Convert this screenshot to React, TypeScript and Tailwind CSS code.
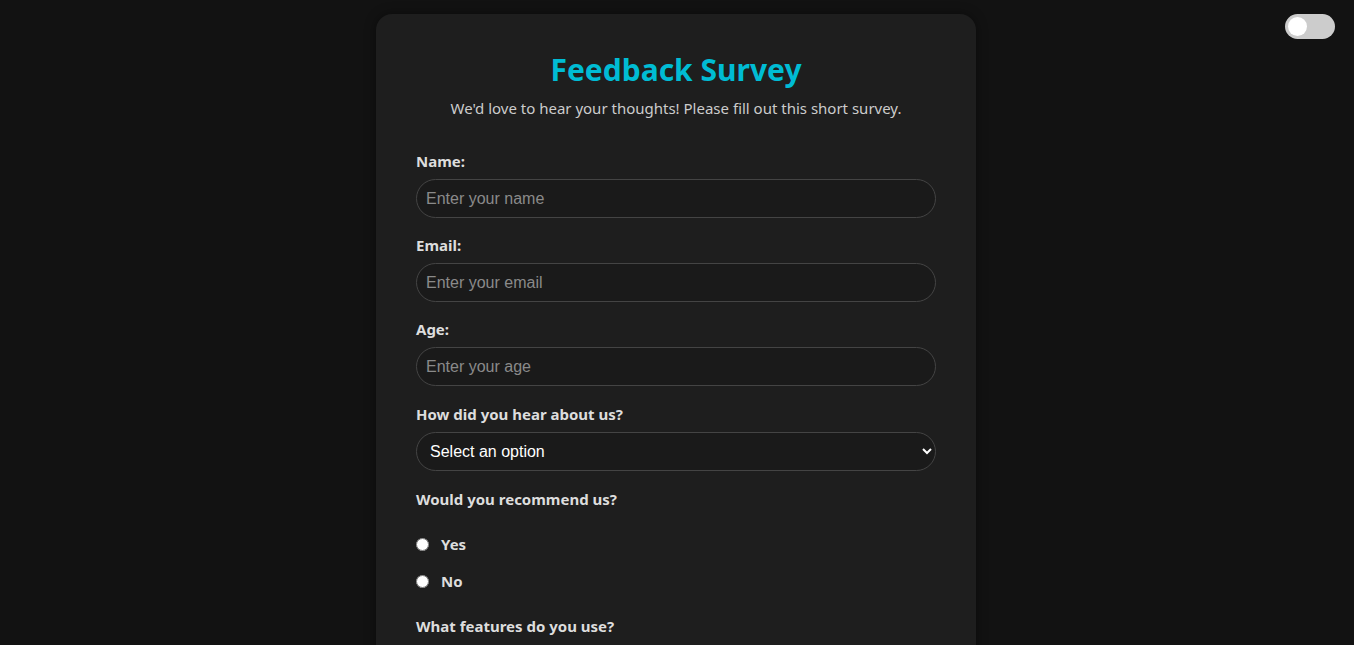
import React, { useState } from 'react';

const labelCls = 'block mb-2 text-[15px] leading-5 font-bold text-[#dddddd]';
const inputCls =
  'w-full h-[39px] rounded-full border border-[#444444] bg-[#1a1a1a] px-[9px] text-base text-white placeholder:text-[#8a8a8a] outline-none';

export default function App() {
  const [dark, setDark] = useState(false);

  return (
    <div className="min-h-screen bg-[#121212] font-['Segoe_UI','Noto_Sans',sans-serif]">
      {/* Theme toggle */}
      <button
        onClick={() => setDark(!dark)}
        className="fixed top-[14px] right-[19px] w-[50px] h-[25px] rounded-full bg-[#cccccc] p-[3px] flex items-center"
      >
        <span className={`block w-[19px] h-[19px] rounded-full bg-white ${dark ? 'ml-auto' : ''}`} />
      </button>

      <div className="flex justify-center pt-[14px] pr-[2px]">
        <div className="w-[600px] rounded-2xl bg-[#1e1e1e] px-10 pt-[36px] pb-10 shadow-[0_0_12px_rgba(0,0,0,0.4)]">
          <h1 className="text-center text-[30px] leading-10 font-bold text-[#00bcd4]">Feedback Survey</h1>
          <p className="mt-[8px] text-center text-[15px] leading-5 text-[#cccccc]">
            We'd love to hear your thoughts! Please fill out this short survey.
          </p>

          <form className="mt-[33px] font-['Arial','Liberation_Sans',sans-serif]">
            <div>
              <label className={`${labelCls} font-['Segoe_UI','Noto_Sans',sans-serif]`}>Name:</label>
              <input type="text" placeholder="Enter your name" className={inputCls} />
            </div>
            <div className="mt-[17px]">
              <label className={`${labelCls} font-['Segoe_UI','Noto_Sans',sans-serif]`}>Email:</label>
              <input type="email" placeholder="Enter your email" className={inputCls} />
            </div>
            <div className="mt-[17px]">
              <label className={`${labelCls} font-['Segoe_UI','Noto_Sans',sans-serif]`}>Age:</label>
              <input type="number" placeholder="Enter your age" className={inputCls} />
            </div>
            <div className="mt-[18px]">
              <label className={`${labelCls} font-['Segoe_UI','Noto_Sans',sans-serif]`}>How did you hear about us?</label>
              <select className="w-full h-[39px] rounded-full border border-[#444444] bg-[#1a1a1a] pl-[9px] pr-1 text-base text-white outline-none">
                <option>Select an option</option>
                <option>Social Media</option>
                <option>Friend</option>
                <option>Advertisement</option>
              </select>
            </div>
            <div className="mt-[18px] font-['Segoe_UI','Noto_Sans',sans-serif]">
              <p className={labelCls}>Would you recommend us?</p>
              <div className="mt-[25px] flex flex-col gap-[17px]">
                {['Yes', 'No'].map((opt) => (
                  <label key={opt} className="flex items-center h-5 text-[15px] font-bold text-[#dddddd]">
                    <input type="radio" name="recommend" className="w-[13px] h-[13px] mr-[12px]" />
                    {opt}
                  </label>
                ))}
              </div>
            </div>
            <div className="mt-[25px] font-['Segoe_UI','Noto_Sans',sans-serif]">
              <p className={labelCls}>What features do you use?</p>
            </div>
          </form>
        </div>
      </div>
    </div>
  );
}
